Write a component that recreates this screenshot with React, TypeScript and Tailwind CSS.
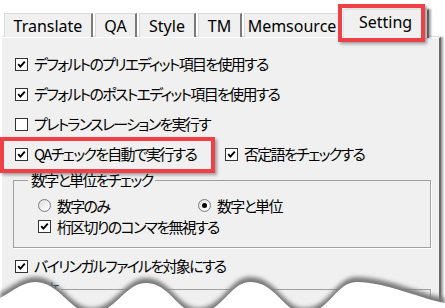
import React from "react";

const jp = "font-['Noto_Sans_CJK_JP',sans-serif] [font-feature-settings:'palt'] text-[15px] leading-[20px] tracking-[-1.7px] text-black";

const Check = ({ checked }: { checked?: boolean }) => (
  <span className="w-[13px] h-[13px] border border-[#333333] bg-white flex items-center justify-center shrink-0">
    {checked && (
      <svg width="9" height="9" viewBox="0 0 9 9">
        <path d="M1.2 4.2 L3.4 6.6 L7.8 1.6" stroke="#000" strokeWidth="1.9" fill="none" />
      </svg>
    )}
  </span>
);

const Radio = ({ checked }: { checked?: boolean }) => (
  <span className="w-[13px] h-[13px] rounded-full border border-[#7a7a7a] bg-gradient-to-br from-[#e0e0e0] to-white flex items-center justify-center shrink-0">
    {checked && <span className="w-[5px] h-[5px] rounded-full bg-black" />}
  </span>
);

const CheckRow = ({ checked, label, className = "" }: { checked?: boolean; label: string; className?: string }) => (
  <div className={"flex items-center gap-[6px] " + className}>
    <Check checked={checked} />
    <span className={jp}>{label}</span>
  </div>
);

const Tab = ({ label, w, selected }: { label: string; w: string; selected?: boolean }) =>
  selected ? (
    <div
      className={
        "relative z-10 -mb-px h-[29px] bg-[#f0f0f0] border-t border-l border-[#e4e4e4] border-r-2 border-r-[#6a6a6a] flex items-start justify-center pt-[2px] font-['Noto_Sans',sans-serif] text-[16px] leading-[21px] text-black shadow-[2px_0_2px_rgba(0,0,0,0.35)] " +
        w
      }
    >
      {label}
    </div>
  ) : (
    <div
      className={
        "h-[24px] bg-[#f0f0f0] border-t border-l border-[#d9d9d9] border-r-2 border-r-[#7a7a7a] flex items-start justify-center pt-[2px] font-['Noto_Sans',sans-serif] text-[16px] leading-[21px] text-black " +
        w
      }
    >
      {label}
    </div>
  );

export default function App() {
  return (
    <div className="relative w-[445px] h-[308px] bg-white overflow-hidden">
      {/* tab strip */}
      <div className="flex items-end h-[37px] pl-[4px] gap-[2px]">
        <Tab label="Translate" w="w-[89px]" />
        <Tab label="QA" w="w-[42px]" />
        <Tab label="Style" w="w-[57px]" />
        <Tab label="TM" w="w-[44px]" />
        <Tab label="Memsource" w="w-[97px]" />
        <Tab label="Setting" w="w-[86px]" selected />
      </div>

      {/* panel */}
      <div className="ml-[1px] w-[440px] h-[271px] bg-[#f0f0f0] border-t border-l border-white border-r-2 border-r-[#6a6a6a] shadow-[2px_0_2px_rgba(0,0,0,0.4)] pt-[11px]">
        <div className="pl-[13px]">
          <CheckRow checked label="デフォルトのプリエディット項目を使用する" className="h-[30px]" />
          <CheckRow checked label="デフォルトのポストエディット項目を使用する" className="h-[30px]" />
          <CheckRow label="プレトランスレーションを実行す" className="h-[30px]" />
          <div className="flex items-center h-[30px]">
            <CheckRow checked label="QAチェックを自動で実行する" className="w-[210px]" />
            <CheckRow checked label="否定語をチェックする" />
          </div>
        </div>

        {/* group box 1 */}
        <div className="relative mt-[11px] ml-[11px] w-[418px] border border-[#a0a0a0] shadow-[1px_1px_0_#ffffff] pt-[14px] pb-[10px] pl-[24px]">
          <span className={"absolute -top-[11px] left-[14px] bg-[#f0f0f0] px-[3px] " + jp}>数字と単位をチェック</span>
          <div className="flex items-center h-[21px]">
            <div className="flex items-center gap-[6px] w-[160px]">
              <Radio />
              <span className={jp}>数字のみ</span>
            </div>
            <div className="flex items-center gap-[6px]">
              <Radio checked />
              <span className={jp}>数字と単位</span>
            </div>
          </div>
          <CheckRow checked label="桁区切りのコンマを無視する" className="h-[21px]" />
        </div>

        <div className="pl-[13px] mt-[3px]">
          <CheckRow checked label="バイリンガルファイルを対象にする" className="h-[30px]" />
        </div>

        {/* group box 2 */}
        <div className="relative mt-[8px] ml-[11px] w-[418px] h-[40px] border border-[#a0a0a0] shadow-[1px_1px_0_#ffffff]">
          <span className={"absolute -top-[11px] left-[14px] bg-[#f0f0f0] px-[3px] " + jp}>訳文</span>
        </div>
      </div>

      {/* red annotation boxes */}
      <div className="absolute left-[338px] top-[4px] w-[87px] h-[38px] border-[4px] border-[#ef3f47] shadow-[2px_2px_3px_rgba(0,0,0,0.35)] z-20" />
      <div className="absolute left-0 top-[137px] w-[215px] h-[36px] border-[4px] border-[#ef3f47] shadow-[2px_2px_3px_rgba(0,0,0,0.35)] z-20" />

      {/* torn edge */}
      <svg className="absolute left-0 top-0 z-30 pointer-events-none" width="445" height="308" viewBox="0 0 445 308">
        <defs>
          <filter id="blur" x="-10%" y="-50%" width="120%" height="200%">
            <feGaussianBlur stdDeviation="2.2" />
          </filter>
        </defs>
        <g transform="translate(0,-5)" filter="url(#blur)">
          <path
            d="M0,298 C12,292 22,282 35,282 C60,282 70,313 92,313 C115,313 125,283 146,283 C170,283 178,313 198,313 C222,313 230,282 250,282 C276,282 284,313 304,313 C330,313 335,282 357,282 C385,282 425,300 445,303 L445,320 L0,320 Z"
            fill="#7a7a7a"
          />
        </g>
        <path
          d="M0,298 C12,292 22,282 35,282 C60,282 70,313 92,313 C115,313 125,283 146,283 C170,283 178,313 198,313 C222,313 230,282 250,282 C276,282 284,313 304,313 C330,313 335,282 357,282 C385,282 425,300 445,303 L445,320 L0,320 Z"
          fill="#ffffff"
        />
      </svg>
    </div>
  );
}
